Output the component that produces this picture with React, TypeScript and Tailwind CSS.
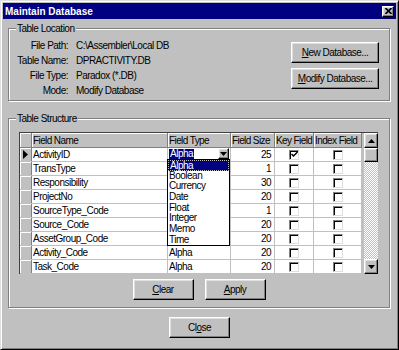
import type { ReactNode } from "react";
import clsx from "clsx";

const font = "font-['Liberation_Sans',Arial,sans-serif] tracking-[-0.5px] whitespace-nowrap";

const rows = [
  { name: "ActivityID", type: "", size: 25, key: true },
  { name: "TransType", type: "", size: 1 },
  { name: "Responsibility", type: "", size: 30 },
  { name: "ProjectNo", type: "", size: 20 },
  { name: "SourceType_Code", type: "", size: 1 },
  { name: "Source_Code", type: "", size: 20 },
  { name: "AssetGroup_Code", type: "", size: 20 },
  { name: "Activity_Code", type: "Alpha", size: 20 },
  { name: "Task_Code", type: "Alpha", size: 20 },
];

const types = ["Alpha", "Boolean", "Currency", "Date", "Float", "Integer", "Memo", "Time"];

const raised =
  "bg-[#c0c0c0] border border-t-white border-l-white border-r-black border-b-black shadow-[inset_-1px_-1px_0_#808080,inset_1px_1px_0_#dfdfdf]";

const Button = ({ children, className }: { children: ReactNode; className?: string }) => (
  <button className={clsx(raised, "h-[21px] text-[10px] leading-none text-black", className)}>
    {children}
  </button>
);

const Arrow = ({ down }: { down?: boolean }) => (
  <svg width="7" height="4" viewBox="0 0 7 4">
    <polygon points={down ? "0,0 7,0 3.5,4" : "0,4 7,4 3.5,0"} fill="#000" />
  </svg>
);

const Checkbox = ({ checked }: { checked?: boolean }) => (
  <div className="w-[10px] h-[10px] bg-white border border-t-[#808080] border-l-[#808080] border-r-[#dfdfdf] border-b-[#dfdfdf] shadow-[inset_1px_1px_0_#000] flex items-center justify-center">
    {checked && (
      <svg width="7" height="7" viewBox="0 0 7 7">
        <path d="M0.5 3 L2.5 5 L6.5 1" stroke="#000" strokeWidth="1.5" fill="none" />
      </svg>
    )}
  </div>
);

const GroupBox = ({ title, className, children }: { title: string; className?: string; children: ReactNode }) => (
  <div
    className={clsx(
      "w-[382px] border border-[#808080] shadow-[inset_1px_1px_0_#fff,1px_1px_0_#fff]",
      className,
    )}
  >
    <div className="-mt-[7px] ml-[7px] px-[1px] w-fit bg-[#c0c0c0] leading-[13px]">{title}</div>
    {children}
  </div>
);

const headCell =
  "h-full border-r border-[#808080] shadow-[inset_1px_1px_0_#fff] pl-[1px] flex items-center overflow-hidden tracking-[-0.6px]";
const cell = "h-full border-r border-[#c0c0c0] flex items-center";

export default function App() {
  return (
    <div
      className={clsx(
        "w-[399px] h-[350px] overflow-hidden bg-[#c0c0c0] border border-t-[#dfdfdf] border-l-[#dfdfdf] border-r-black border-b-black shadow-[inset_1px_1px_0_#fff,inset_-1px_-1px_0_#808080] p-[2px] text-[10px] text-black",
        font,
      )}
    >
      {/* title bar */}
      <div className="h-[16px] bg-[#000080] flex items-center justify-between pl-[2px] pr-[2px]">
        <span className="text-white font-bold text-[10px] tracking-normal">Maintain Database</span>
        <div className={clsx(raised, "w-[12px] h-[11px] flex items-center justify-center")}>
          <svg width="7" height="6" viewBox="0 0 7 6">
            <path d="M0.5 0 L6.5 6 M6.5 0 L0.5 6" stroke="#000" strokeWidth="1.6" />
          </svg>
        </div>
      </div>

      <div className="px-[5px]">
        {/* Table Location */}
        <GroupBox title="Table Location" className="mt-[9px] h-[73px]">
          <div className="flex items-start justify-between pr-[10px]">
            <div className="mt-[3px] flex">
              <div className="w-[59px] text-right">
                <div className="h-[15px] leading-[15px]">File Path:</div>
                <div className="h-[15px] leading-[15px]">Table Name:</div>
                <div className="h-[15px] leading-[15px]">File Type:</div>
                <div className="h-[15px] leading-[15px]">Mode:</div>
              </div>
              <div className="ml-[8px]">
                <div className="h-[15px] leading-[15px]">C:\Assembler\Local DB</div>
                <div className="h-[15px] leading-[15px]">DPRACTIVITY.DB</div>
                <div className="h-[15px] leading-[15px]">Paradox (*.DB)</div>
                <div className="h-[15px] leading-[15px]">Modify Database</div>
              </div>
            </div>
            <div className="mt-[7px] flex flex-col gap-[5px]">
              <Button className="w-[88px]">
                <span className="underline">N</span>ew Database...
              </Button>
              <Button className="w-[88px]">
                <span className="underline">M</span>odify Database...
              </Button>
            </div>
          </div>
        </GroupBox>

        {/* Table Structure */}
        <GroupBox title="Table Structure" className="mt-[17px] h-[190px]">
          <div className="mt-[7px] ml-[10px] w-[359px] border-l border-t border-[#404040] relative flex">
            <div className="w-[342px]">
              <div className="h-[15px] flex border-b border-[#808080]">
                <div className={clsx(headCell, "w-[12px]")} />
                <div className={clsx(headCell, "w-[136px]")}>Field Name</div>
                <div className={clsx(headCell, "w-[63px]")}>Field Type</div>
                <div className={clsx(headCell, "w-[44px]")}>Field Size</div>
                <div className={clsx(headCell, "w-[39px]")}>Key Field</div>
                <div className={clsx(headCell, "w-[48px]")}>Index Field</div>
              </div>
              {rows.map((r, i) => (
                <div key={r.name} className="h-[14px] flex border-b border-[#c0c0c0] bg-white">
                  <div className="w-[12px] h-full bg-[#c0c0c0] border-r border-[#808080] shadow-[inset_1px_1px_0_#fff] flex items-center justify-center">
                    {i === 0 && (
                      <svg width="5" height="9" viewBox="0 0 5 9">
                        <polygon points="0,0 5,4.5 0,9" fill="#000" />
                      </svg>
                    )}
                  </div>
                  <div className={clsx(cell, "w-[136px] pl-[1px]")}>{r.name}</div>
                  <div className={clsx(cell, "w-[63px] pl-[1px]")}>
                    {i === 0 ? (
                      <div className="w-full h-full flex items-start">
                        <span className="mt-[1px] h-[10px] leading-[10px] px-[1px] bg-[#000080] text-white">
                          Alpha
                        </span>
                        <div className={clsx(raised, "ml-auto mr-[1px] w-[11px] h-[11px] flex items-center justify-center")}>
                          <Arrow down />
                        </div>
                      </div>
                    ) : (
                      r.type
                    )}
                  </div>
                  <div className={clsx(cell, "w-[44px] justify-end pr-[3px]")}>{r.size}</div>
                  <div className={clsx(cell, "w-[39px] justify-center")}>
                    <Checkbox checked={r.key} />
                  </div>
                  <div className={clsx(cell, "w-[48px] justify-center")}>
                    <Checkbox />
                  </div>
                </div>
              ))}
            </div>

            {/* vertical scrollbar */}
            <div className="ml-[2px] w-[14px] flex flex-col">
              <div className={clsx(raised, "h-[15px] flex items-center justify-center")}>
                <Arrow />
              </div>
              <div className={clsx(raised, "h-[14px]")} />
              <div className="flex-1 bg-[repeating-conic-gradient(#c0c0c0_0_25%,#ffffff_0_50%)] [background-size:2px_2px]" />
              <div className={clsx(raised, "h-[15px] flex items-center justify-center")}>
                <Arrow down />
              </div>
            </div>

            {/* open Field Type list */}
            <div className="absolute left-[147px] top-[26px] w-[63px] h-[87px] bg-white border border-black">
              {types.map((t, i) => (
                <div
                  key={t}
                  className={clsx(
                    "h-[10.7px] leading-[10.7px] pl-[1px]",
                    i === 0 && "bg-[#000080] text-white border border-dotted border-[#c0c0c0]",
                  )}
                >
                  {t}
                </div>
              ))}
            </div>
          </div>

          <div className="mt-[5px] flex justify-center gap-[11px]">
            <Button className="w-[61px]">
              <span className="underline">C</span>lear
            </Button>
            <Button className="w-[61px]">
              <span className="underline">A</span>pply
            </Button>
          </div>
        </GroupBox>

        <div className="mt-[9px] flex justify-center">
          <Button className="w-[61px]">
            Cl<span className="underline">o</span>se
          </Button>
        </div>
      </div>
    </div>
  );
}
